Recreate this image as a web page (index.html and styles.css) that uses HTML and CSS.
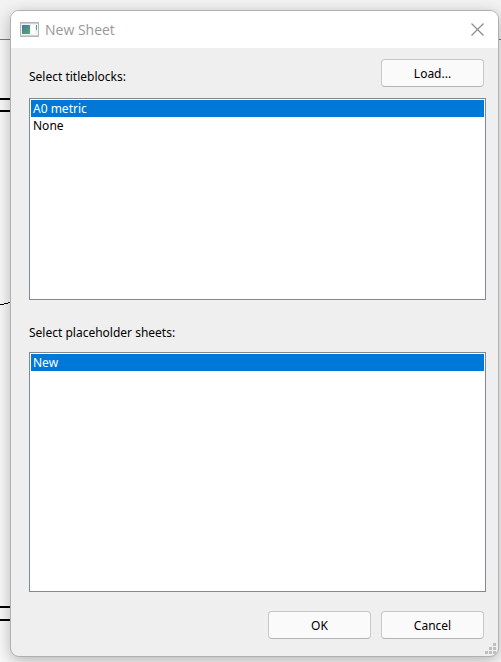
FILE: index.html
```
<!DOCTYPE html>
<html lang="en">
<head>
    <meta charset="utf-8">
    <title>New Sheet</title>
    <meta name="viewport" content="width=device-width, initial-scale=1.0">
    <link rel="stylesheet" href="styles.css">
</head>
<body>
    <!-- drawing sheet behind the dialog -->
    <svg class="sheet" width="100%" height="100%" aria-hidden="true">
        <rect width="100%" height="39" fill="#f3f3f3"/>
        <rect y="39" width="100%" height="1" fill="#777"/>
        <rect y="98" width="12" height="2"/>
        <rect y="110" width="12" height="2"/>
        <path d="M0 304.5h4M4 303.5h4M8 302.5h3" stroke="#000"/>
        <rect y="606" width="12" height="2"/>
        <rect y="619" width="12" height="2"/>
    </svg>

    <form class="dialog" role="dialog" aria-labelledby="dialog-title">
        <header class="title-bar">
            <svg class="app-icon" width="19" height="16" viewBox="0 0 19 16" aria-hidden="true">
                <defs>
                    <linearGradient id="screen" x1="0" y1="0" x2="1" y2="1">
                        <stop offset="0" stop-color="#4577a0"/>
                        <stop offset="1" stop-color="#55ad68"/>
                    </linearGradient>
                </defs>
                <rect x=".5" y=".5" width="18" height="14" fill="#f2f3f6" stroke="#b3b6bb"/>
                <path d="M1 1.5h17M1 13.5h17" stroke="#cdd0d6"/>
                <rect x="2" y="3" width="8" height="9" fill="url(#screen)"/>
                <rect x="11" y="3" width="4" height="9" fill="#fff"/>
                <path d="M16 3h1v6l-1-2z" fill="#55a08a"/>
            </svg>
            <h1 id="dialog-title">New Sheet</h1>
            <button type="button" class="close-button" aria-label="Close">
                <svg width="13" height="13" viewBox="0 0 13 13">
                    <path d="M.5 .5l12 12M12.5 .5l-12 12" fill="none" stroke="#8c8c8c" stroke-width="1.2"/>
                </svg>
            </button>
        </header>

        <div class="content">
            <div class="label-row">
                <label for="titleblocks">Select titleblocks:</label>
                <button type="button" class="button">Load...</button>
            </div>
            <select id="titleblocks" class="list titleblocks" size="12">
                <option selected>A0 metric</option>
                <option>None</option>
            </select>

            <label class="placeholder-label" for="placeholders">Select placeholder sheets:</label>
            <select id="placeholders" class="list placeholders" size="14">
                <option selected>New</option>
            </select>

            <div class="buttons">
                <button type="submit" class="button">OK</button>
                <button type="button" class="button">Cancel</button>
            </div>
        </div>

        <svg class="grip" width="11" height="11" viewBox="0 0 11 11" fill="#bfbfbf" aria-hidden="true">
            <path d="M8 0h3v3h-3zM4 4h3v3h-3zM8 4h3v3h-3zM0 8h3v3h-3zM4 8h3v3h-3zM8 8h3v3h-3z"/>
        </svg>
    </form>
</body>
</html>
```
FILE: styles.css
```
:root {
    --sheet-bg: #f9f9f9;
    --dialog-bg: #efefef;
    --dialog-border: #b0b0b0;
    --list-border: #828790;
    --selection: #0078d7;
    --button-bg: #fafafa;
    --button-border: #c8c8c8;
}

* {
    box-sizing: border-box;
}

body {
    display: flex;
    min-height: 100vh;
    margin: 0;
    padding: 10px 2px 5px 10px;
    overflow: hidden;
    background: var(--sheet-bg);
    color: #000;
    font: 12px/16px "Noto Sans", Tahoma, sans-serif;
}

.sheet {
    position: absolute;
    top: 0;
    left: 0;
}

.dialog {
    position: relative;
    display: flex;
    flex-direction: column;
    flex: 1;
    border: 1px solid var(--dialog-border);
    border-radius: 9px;
    background: var(--dialog-bg);
    box-shadow: 0 4px 16px rgba(0, 0, 0, 0.28);
}

.title-bar {
    display: flex;
    align-items: center;
    height: 37px;
    padding: 0 8px 0 9px;
    border-radius: 8px 8px 0 0;
    background: #fff;
}

.title-bar h1 {
    flex: 1;
    margin: 0 0 0 6px;
    color: #999;
    font: 14px/20px "Open Sans", "Segoe UI", sans-serif;
}

.close-button {
    display: flex;
    padding: 6px;
    border: none;
    background: none;
}

.content {
    display: flex;
    flex-direction: column;
    flex: 1;
    padding: 11px 12px 17px 18px;
}

.label-row {
    display: flex;
    align-items: center;
    justify-content: space-between;
    padding-right: 2px;
    margin-bottom: 11px;
}

.label-row label {
    padding-top: 8px;
}

.button {
    width: 103px;
    height: 28px;
    padding: 2px 0 0;
    border: 1px solid var(--button-border);
    border-bottom-color: #b4b4b4;
    border-radius: 4px;
    background: var(--button-bg);
    color: inherit;
    font: inherit;
}

.list {
    width: 100%;
    min-height: 0;
    padding: 1px;
    border: 1px solid var(--list-border);
    border-radius: 0;
    outline: none;
    overflow: hidden;
    background: #fff;
    color: inherit;
    font: inherit;
}

.list option {
    min-height: 16px;
    padding: 0 2px;
    line-height: 16px;
}

.list option:checked {
    background: linear-gradient(var(--selection), var(--selection));
    -webkit-text-fill-color: #fff;
}

.titleblocks {
    flex: 202 1 0;
}

.placeholders {
    flex: 240 1 0;
}

.placeholder-label {
    margin: 25px 0 11px;
}

.buttons {
    display: flex;
    justify-content: flex-end;
    gap: 10px;
    margin-top: 19px;
    padding-right: 2px;
}

.grip {
    position: absolute;
    right: 2px;
    bottom: 2px;
}
```
